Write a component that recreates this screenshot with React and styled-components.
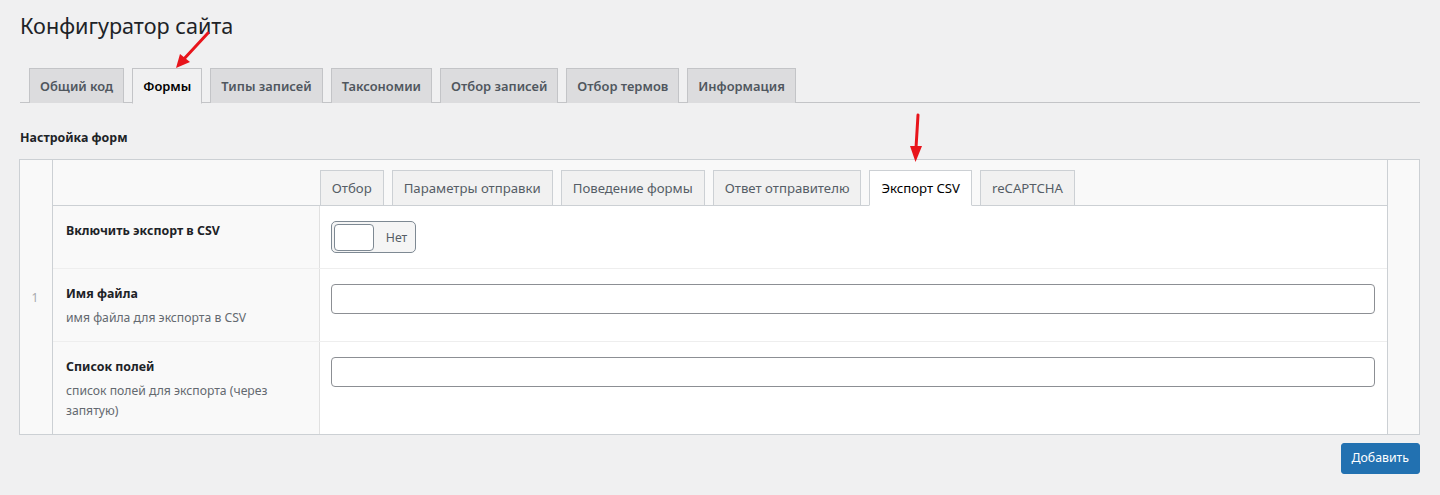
import React from "react";
import styled, { createGlobalStyle } from "styled-components";

const Global = createGlobalStyle`
  html, body { margin: 0; padding: 0; background: #f0f0f1; }
  body { font-family: "Noto Sans", "Open Sans", sans-serif; color: #1d2327; font-size: 12.3px; }
  * { box-sizing: border-box; }
`;

const Page = styled.div`
  position: relative;
  padding: 10px 20px 0 20px;
  height: 495px;
`;

const Title = styled.h1`
  margin: 0;
  font-size: 21.6px;
  font-weight: 400;
  line-height: 32px;
  color: #1d2327;
  padding: 0;
`;

const NavWrap = styled.div`
  display: flex;
  gap: 8px;
  margin-top: 26px;
  padding-left: 9px;
  border-bottom: 1px solid #c3c4c7;
  height: 35px;
`;

const NavTab = styled.div`
  height: ${(p) => (p.$active ? "36px" : "35px")};
  padding: 0 10px;
  display: flex;
  align-items: center;
  font-size: 12.9px;
  font-weight: 600;
  line-height: 24px;
  border: 1px solid #c3c4c7;
  border-bottom: ${(p) => (p.$active ? "1px solid #f0f0f1" : "none")};
  background: ${(p) => (p.$active ? "#f0f0f1" : "#dcdcde")};
  color: ${(p) => (p.$active ? "#000" : "#50575e")};
  white-space: nowrap;
`;

const Section = styled.div`
  margin-top: 26px;
  font-size: 12.4px;
  font-weight: 700;
  color: #1d2327;
  line-height: 18px;
`;

const Table = styled.div`
  margin-top: 12px;
  margin-left: -1px;
  display: grid;
  grid-template-columns: 33px 1fr 32px;
  border: 1px solid #ccd0d4;
  background: #f9f9f9;
`;

const OrderCell = styled.div`
  display: flex;
  align-items: center;
  justify-content: center;
  color: #a7aaad;
  font-size: 12px;
  border-right: 1px solid #ccd0d4;
  padding-right: 2px;
`;

const RemoveCell = styled.div`
  border-left: 1px solid #ccd0d4;
`;

const Fields = styled.div`
  display: flex;
  flex-direction: column;
`;

const TabWrap = styled.div`
  display: flex;
  gap: 8px;
  padding-left: 20%;
  padding-top: 10px;
  height: 46px;
  border-bottom: 1px solid #ccd0d4;
  background: #f9f9f9;
`;

const SubTab = styled.div`
  height: ${(p) => (p.$active ? "36px" : "35px")};
  padding: 0 11px;
  display: flex;
  align-items: center;
  font-size: 13.2px;
  font-weight: 400;
  border: 1px solid #ccd0d4;
  border-bottom: ${(p) => (p.$active ? "1px solid #fff" : "none")};
  background: ${(p) => (p.$active ? "#fff" : "#f1f1f1")};
  color: ${(p) => (p.$active ? "#000" : "#555d66")};
  white-space: nowrap;
  position: relative;
  z-index: 1;
`;

const Row = styled.div`
  display: grid;
  grid-template-columns: 20% 1fr;
  border-top: ${(p) => (p.$first ? "none" : "1px solid #eeeeee")};
  min-height: ${(p) => p.$min || 0}px;
`;

const LabelCell = styled.div`
  background: #f9f9f9;
  border-right: 1px solid #e1e1e1;
  padding: 15px 13px 12px 13px;
`;

const LabelText = styled.div`
  font-size: 12.4px;
  font-weight: 700;
  color: #1d2327;
  line-height: 20px;
`;

const Desc = styled.div`
  font-size: 12.2px;
  color: #646970;
  line-height: 20px;
  margin-top: 4px;
`;

const ValueCell = styled.div`
  background: #fff;
  padding: 15px 12px 12px 11px;
`;

const Toggle = styled.div`
  width: 85px;
  height: 32px;
  border: 1px solid #7e8993;
  border-radius: 5px;
  background: #f5f5f5;
  display: flex;
  align-items: center;
  padding: 0 2px;
`;

const Knob = styled.div`
  width: 40px;
  height: 27px;
  border: 1px solid #7e8993;
  border-radius: 4px;
  background: #fff;
`;

const ToggleLabel = styled.span`
  margin-left: 12px;
  font-size: 12.3px;
  color: #555d66;
`;

const Input = styled.div`
  height: 30px;
  border: 1px solid #8c8f94;
  border-radius: 4px;
  background: #fff;
`;

const Footer = styled.div`
  display: flex;
  justify-content: flex-end;
  margin-top: 8px;
`;

const Button = styled.button`
  height: 31px;
  padding: 0 10px;
  background: #2271b1;
  border: 1px solid #2271b1;
  border-radius: 3px;
  color: #fff;
  font-family: inherit;
  font-size: 12.3px;
  line-height: 1;
`;

const Arrow = styled.svg`
  position: absolute;
  left: ${(p) => p.$x}px;
  top: ${(p) => p.$y}px;
  overflow: visible;
  pointer-events: none;
`;

const navTabs = ["Общий код", "Формы", "Типы записей", "Таксономии", "Отбор записей", "Отбор термов", "Информация"];
const subTabs = ["Отбор", "Параметры отправки", "Поведение формы", "Ответ отправителю", "Экспорт CSV", "reCAPTCHA"];

export default function App() {
  return (
    <>
      <Global />
      <Page>
        <Title>Конфигуратор сайта</Title>
        <NavWrap>
          {navTabs.map((t) => (
            <NavTab key={t} $active={t === "Формы"}>{t}</NavTab>
          ))}
        </NavWrap>
        <Section>Настройка форм</Section>
        <Table>
          <OrderCell>1</OrderCell>
          <Fields>
            <TabWrap>
              {subTabs.map((t) => (
                <SubTab key={t} $active={t === "Экспорт CSV"}>{t}</SubTab>
              ))}
            </TabWrap>
            <Row $first $min={62}>
              <LabelCell>
                <LabelText>Включить экспорт в CSV</LabelText>
              </LabelCell>
              <ValueCell>
                <Toggle>
                  <Knob />
                  <ToggleLabel>Нет</ToggleLabel>
                </Toggle>
              </ValueCell>
            </Row>
            <Row $min={73}>
              <LabelCell>
                <LabelText>Имя файла</LabelText>
                <Desc>имя файла для экспорта в CSV</Desc>
              </LabelCell>
              <ValueCell>
                <Input />
              </ValueCell>
            </Row>
            <Row $min={93}>
              <LabelCell>
                <LabelText>Список полей</LabelText>
                <Desc>список полей для экспорта (через запятую)</Desc>
              </LabelCell>
              <ValueCell>
                <Input />
              </ValueCell>
            </Row>
          </Fields>
          <RemoveCell />
        </Table>
        <Footer>
          <Button>Добавить</Button>
        </Footer>

        <Arrow $x={170} $y={30} width="45" height="42">
          <line x1="38" y1="3" x2="13" y2="30" stroke="#e8141b" strokeWidth="3" strokeLinecap="round" />
          <polygon points="6,38 10,24 20,32" fill="#e8141b" />
        </Arrow>
        <Arrow $x={905} $y={112} width="24" height="52">
          <line x1="13" y1="3" x2="11" y2="36" stroke="#e8141b" strokeWidth="3" strokeLinecap="round" />
          <polygon points="5,34 17,34 10.5,50" fill="#e8141b" />
        </Arrow>
      </Page>
    </>
  );
}
